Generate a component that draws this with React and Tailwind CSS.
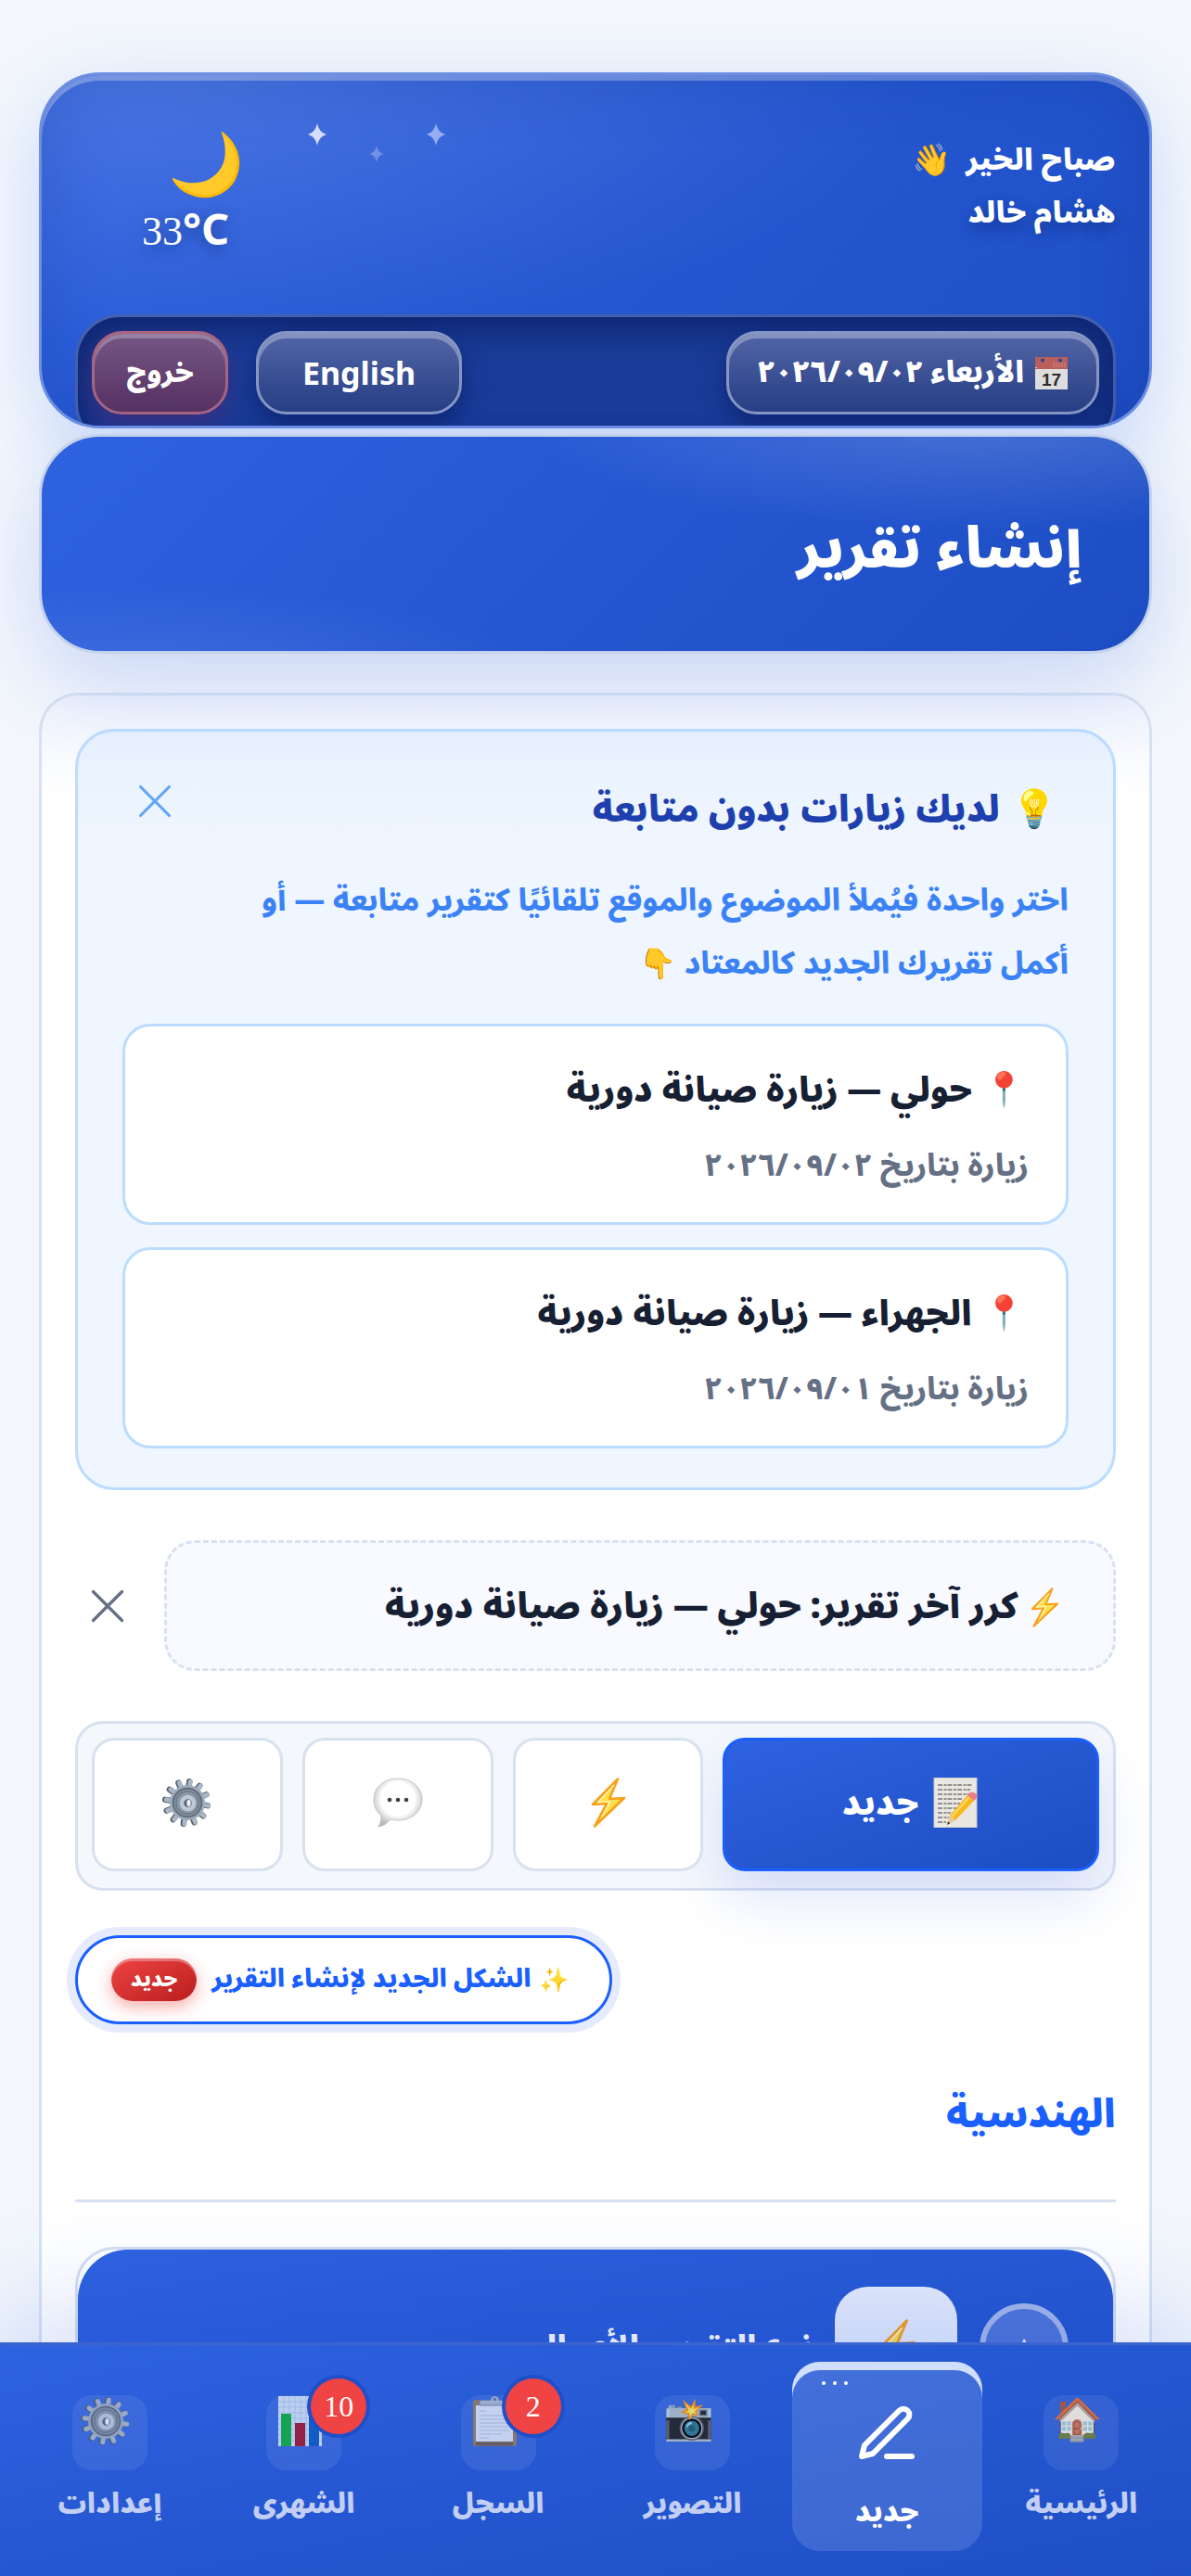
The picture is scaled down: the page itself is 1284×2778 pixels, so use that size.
import { X } from 'lucide-react';

const visits = [
  { id: 1, title: 'حولي — زيارة صيانة دورية', date: 'زيارة بتاريخ ٢٠٢٦/٠٩/٠٢' },
  { id: 2, title: 'الجهراء — زيارة صيانة دورية', date: 'زيارة بتاريخ ٢٠٢٦/٠٩/٠١' },
];

function Star({ className }) {
  return (
    <svg viewBox="0 0 24 28" className={className} aria-hidden="true">
      <path d="M12 0C14 8 17 12 24 14C17 16 14 20 12 28C10 20 7 16 0 14C7 12 10 8 12 0Z" fill="#d6dcff" />
    </svg>
  );
}

function Bolt({ className }) {
  return (
    <svg viewBox="0 0 38 54" className={className} aria-hidden="true">
      <path d="M29 1.5L2 29L17 28L4 52.5L36 22L20 23Z" fill="#ffe04a" stroke="#f9a01b" strokeWidth="2.6" strokeLinejoin="round" />
      <path d="M25 8L8 26.5L21 25.5L12 42" fill="none" stroke="#fff6b8" strokeWidth="1.5" />
    </svg>
  );
}

function Gear({ className }) {
  return (
    <svg viewBox="0 0 54 54" className={className} aria-hidden="true">
      <g stroke="#4f5b69" strokeWidth="6.4" strokeLinecap="round">
        {[0, 30, 60, 90, 120, 150].map((a) => (
          <path key={a} d="M26 4V50" transform={`rotate(${a + 8} 26 27)`} />
        ))}
      </g>
      <g stroke="#a9b6c4" strokeWidth="5" strokeLinecap="round">
        {[0, 30, 60, 90, 120, 150].map((a) => (
          <path key={a} d="M27 4V50" transform={`rotate(${a + 8} 27 27)`} />
        ))}
      </g>
      <circle cx="27" cy="27" r="19" fill="#9eacba" />
      <circle cx="27" cy="27" r="15.5" fill="#7d8a99" stroke="#5a6674" strokeWidth="1.5" />
      <circle cx="27" cy="27" r="12" fill="#8a97a5" stroke="#66727f" strokeWidth="1" />
      <circle cx="27.5" cy="27.5" r="6.5" fill="#56616e" stroke="#bccad8" strokeWidth="4.5" />
      <ellipse cx="28.5" cy="27.5" rx="2.2" ry="3.4" fill="#eef3f8" />
    </svg>
  );
}

function Bubble({ className }) {
  return (
    <svg viewBox="0 0 54 54" className={className} aria-hidden="true">
      <defs>
        <radialGradient id="bubble" cx="50%" cy="42%" r="58%">
          <stop offset="60%" stopColor="#ffffff" />
          <stop offset="100%" stopColor="#b9b9b9" />
        </radialGradient>
      </defs>
      <path d="M27 1C42 1 53 10.500 53 23.500C53 36.500 42 46 27 46C24 46 21 45.700 18.500 45C15.500 49.500 11 52.500 5.500 53C8.500 49.500 9.500 45 8.500 40.500C3.500 36.500 1 30.500 1 23.500C1 10.500 12 1 27 1Z" fill="url(#bubble)" stroke="#c4c4c4" strokeWidth="1" />
      <g fill="#3f3f3f">
        <circle cx="18" cy="24" r="2.300" />
        <circle cx="27" cy="24" r="2.300" />
        <circle cx="36" cy="24" r="2.300" />
      </g>
    </svg>
  );
}

function Memo({ className }) {
  return (
    <svg viewBox="0 0 50 54" className={className} aria-hidden="true">
      <rect x="1" y="0" width="46" height="54" fill="#e9e7e2" stroke="#cbc9c3" />
      <path d="M5 8h37M5 13h35M5 18h37M5 23h26M5 28h24M5 33h20M5 38h14M5 43h12M5 48h9" stroke="#77756f" strokeWidth="1.300" strokeDasharray="5 1.500 3 1" />
      <path d="M15 51L18 41L24 46Z" fill="#e9c99a" />
      <path d="M18 41L37 19L44 25L24 46Z" fill="#f7b81c" />
      <path d="M20 42.500L39 21" stroke="#ffd964" strokeWidth="2" />
      <path d="M37 19L40 16C43 14 49 18 47 22L44 25Z" fill="#ee7d86" />
      <path d="M15 51L16 47.500L18.500 49Z" fill="#33302c" />
    </svg>
  );
}

function Calendar({ className }) {
  return (
    <svg viewBox="0 0 35 35" className={className} aria-hidden="true">
      <rect width="35" height="35" fill="#dedede" />
      <rect width="35" height="13" fill="#b85f5c" />
      <circle cx="8" cy="3.500" r="2" fill="#2b438c" />
      <circle cx="27" cy="3.500" r="2" fill="#2b438c" />
      <path d="M20 6v5M23 6v5M26 6v5M29 6v5M32 6v5" stroke="#c97c77" strokeWidth="1.500" />
      <text x="2" y="12" fontSize="7.500" fill="#eed9d9" fontFamily="Liberation Sans">JUL</text>
      <text x="17.500" y="31" textAnchor="middle" fontSize="19" fill="#2b2b2b" fontFamily="Liberation Sans">17</text>
    </svg>
  );
}

function Chart({ className }) {
  return (
    <svg viewBox="0 0 47 54" className={className} aria-hidden="true">
      <rect width="47" height="54" fill="#d5e2f4" />
      <path d="M0 6h47M0 12h47M0 18h47M0 24h47M0 30h47M0 36h47M0 42h47M0 48h47M6 0v54M12 0v54M18 0v54M24 0v54M30 0v54M36 0v54M42 0v54" stroke="#a9c3e6" strokeWidth="0.800" />
      <rect x="3" y="19" width="11" height="35" fill="#0fae3c" />
      <rect x="18" y="29" width="11" height="25" fill="#a5152f" />
      <rect x="33" y="10" width="11" height="44" fill="#0b5cc2" />
    </svg>
  );
}

function Clipboard({ className }) {
  return (
    <svg viewBox="0 0 47 54" className={className} aria-hidden="true">
      <rect x="0" y="4" width="47" height="50" rx="3" fill="#94795f" />
      <rect x="3" y="10" width="40" height="39" fill="#dce3f4" />
      <path d="M7 16h7M7 21h32M7 25h32M7 29h32M7 33h32M7 37h32M7 41h24M7 45h10" stroke="#b3bdd6" strokeWidth="1.200" />
      <rect x="3" y="49.500" width="40" height="4" fill="#6b5a55" />
      <path d="M7 10V6C7 5 9 4.500 12 4.500H19A4.500 4.500 0 0 1 28 4.500H35C38 4.500 40 5 40 6V10Z" fill="#adb9d2" stroke="#7482a3" />
      <circle cx="23.500" cy="3.500" r="1.700" fill="#5c71ae" />
    </svg>
  );
}

const navItems = [
  { icon: <span className="text-[44px] leading-[54px]">🏠</span>, label: 'الرئيسية' },
  { label: 'جديد', active: true },
  { icon: <span className="text-[44px] leading-[54px]">📸</span>, label: 'التصوير' },
  { icon: <Clipboard className="mt-px h-[54px] w-[47px]" />, label: 'السجل', badge: '2' },
  { icon: <Chart className="mt-px h-[54px] w-[47px]" />, label: 'الشهرى', badge: '10' },
  { icon: <Gear className="mt-px size-[54px]" />, label: 'إعدادات' },
];

function Header() {
  return (
    <header className="relative flex h-[384px] flex-col justify-between overflow-hidden rounded-[66px] border-[3px] border-[#6d8ee2] bg-[radial-gradient(ellipse_at_12%_0%,rgba(255,255,255,0.13),transparent_55%),linear-gradient(135deg,#2f62e0,#2557d2_50%,#1e4fc6)] shadow-[0_24px_80px_rgba(37,99,235,0.2),inset_0_6px_0_rgba(255,255,255,0.28),inset_0_0_70px_rgba(15,40,120,0.22)]">
      <div className="flex items-start justify-between pt-[60px] pr-9 pl-[108px]">
        <div className="mt-1 text-[32px] leading-[57px] font-black text-white">
          <p className="flex items-center gap-4">
            صباح الخير <span className="text-[34px]">👋</span>
          </p>
          <p className="[text-shadow:0_6px_16px_rgba(10,30,90,0.45)]">هشام خالد</p>
        </div>
        <div dir="ltr" className="flex items-start gap-[68px]">
          <div className="flex flex-col">
            <span className="h-[78px] overflow-hidden pl-7 text-[66px] leading-[76px]">🌙</span>
            <span className="flex items-baseline text-white [text-shadow:0_6px_16px_rgba(10,30,90,0.45)]">
              <span className="font-[Liberation_Serif] text-[44px] leading-[54px]">33</span>
              <span className="font-[Noto_Sans] text-[47px] leading-[54px] font-bold">°C</span>
            </span>
          </div>
          <div className="flex gap-11">
            <Star className="-mt-2 h-6 w-[22px]" />
            <Star className="mt-4 h-[18px] w-[18px] opacity-35" />
            <Star className="-mt-2 h-6 w-[22px] opacity-60" />
          </div>
        </div>
      </div>
      <div className="-mb-6 mx-9 flex h-[144px] shrink-0 items-start justify-between rounded-[48px] border-[3px] border-[#4560af] bg-[#1a3c98] px-[15px] pt-[15px] shadow-[inset_0_12px_36px_rgba(10,25,90,0.5),inset_0_0_30px_rgba(10,25,90,0.5)]">
        <button type="button" className="flex h-[90px] w-[402px] items-center justify-center gap-3 rounded-[33px] border-[3px] border-[#8797c4] bg-linear-to-b from-[#5265a6] to-[#283f84] text-[32px] font-black text-white shadow-[inset_0_5px_0_rgba(255,255,255,0.3),0_12px_24px_rgba(8,20,80,0.5)]">
          <Calendar className="size-[35px]" /> الأربعاء ٢٠٢٦/٠٩/٠٢
        </button>
        <div className="flex gap-[30px]">
          <button type="button" lang="en" className="h-[90px] w-[222px] rounded-[33px] border-[3px] border-[#8797c4] bg-linear-to-b from-[#5265a6] to-[#283f84] font-[Noto_Sans] text-[34px] font-bold text-white shadow-[inset_0_5px_0_rgba(255,255,255,0.3),0_12px_24px_rgba(8,20,80,0.5)]">
            English
          </button>
          <button type="button" className="h-[90px] w-[147px] rounded-[33px] border-[3px] border-[#a86580] bg-linear-to-b from-[#745684] to-[#573262] text-[30px] font-black text-white shadow-[inset_0_5px_0_rgba(255,255,255,0.25),0_12px_24px_rgba(120,30,80,0.35)]">
            خروج
          </button>
        </div>
      </div>
    </header>
  );
}

function FollowUpPanel() {
  return (
    <section className="rounded-[42px] border-[3px] border-[#bcdcff] bg-linear-to-b from-[#e8f1fe] to-[#eff6ff] to-15% px-12 pt-[51px] pb-[42px]">
      <div className="flex items-center justify-between pr-3 pl-1">
        <h2 className="flex h-[68px] items-center gap-3 text-[39px] font-black text-[#1e40af]">
          <span className="text-[40px]">💡</span> لديك زيارات بدون متابعة
        </h2>
        <button type="button" aria-label="إغلاق" className="-mt-5 text-[#60a5fa]">
          <X size={62} strokeWidth={1.2} />
        </button>
      </div>
      <p className="mt-[30px] pl-28 text-[33px] leading-[68px] font-extrabold text-[#3b82f6]">
        اختر واحدة فيُملأ الموضوع والموقع تلقائيًا كتقرير متابعة — أو أكمل تقريرك الجديد كالمعتاد <span className="text-[32px]">👇</span>
      </p>
      <ul className="mt-[30px] flex flex-col gap-6">
        {visits.map((v) => (
          <li key={v.id}>
            <button type="button" className="block w-full rounded-[30px] border-[3px] border-[#bcdcff] bg-white px-10 pt-[33px] pb-6 text-right">
              <span className="flex items-center gap-3 pr-1 text-[37px] leading-[72px] font-black text-[#172033]">
                <span className="text-[36px]">📍</span> {v.title}
              </span>
              <span className="mt-2.5 block text-[33px] leading-[72px] font-extrabold text-[#667085]">{v.date}</span>
            </button>
          </li>
        ))}
      </ul>
    </section>
  );
}

function BottomNav() {
  return (
    <nav className="relative z-10 grid shrink-0 grid-cols-6 gap-[5px] border-t-[3px] border-[#3c64d0] bg-linear-to-br from-[#2f62e0] via-[#2557d2] to-[#1e4fc6] px-4 pt-[18px] pb-[27px] shadow-[0_-30px_120px_rgba(37,80,220,0.2)]">
      {navItems.map((item) =>
        item.active ? (
          <a key={item.label} href="#new" aria-current="page" className="relative flex h-[204px] flex-col items-center rounded-[30px] bg-white/13 pt-[42px] text-white shadow-[inset_0_9px_0_#d0dffd]">
            <span aria-hidden="true" className="absolute top-[21px] left-8 flex gap-2">
              <span className="size-1 rounded-full bg-white" />
              <span className="size-1 rounded-full bg-white" />
              <span className="size-1 rounded-full bg-white" />
            </span>
            <svg viewBox="0 0 24 24" className="size-[72px]" fill="none" stroke="currentColor" strokeWidth="2" strokeLinecap="round" strokeLinejoin="round">
              <path d="M12 20h9" />
              <path d="M16.5 3.5a2.121 2.121 0 0 1 3 3L7 19l-4 1 1-4L16.5 3.5z" />
            </svg>
            <span className="mt-6 text-[30px] leading-[50px] font-black">{item.label}</span>
          </a>
        ) : (
          <a key={item.label} href="#tab" className="flex flex-col items-center pt-9 text-[#c3cff2]">
            <span className="relative flex size-[81px] justify-center rounded-[21px] bg-white/8 pr-2">
              <span className="opacity-85">{item.icon}</span>
              {item.badge && (
                <span className="absolute -top-[18px] -right-[27px] flex size-[60px] items-center justify-center rounded-full bg-[#f04343] font-[Liberation_Serif] text-[32px] text-white ring-4 ring-[#1f4fc8]">
                  {item.badge}
                </span>
              )}
            </span>
            <span className="mt-3 text-[30px] leading-[50px] font-black">{item.label}</span>
          </a>
        ),
      )}
    </nav>
  );
}

export default function App() {
  return (
    <div dir="rtl" lang="ar" className="flex h-screen flex-col bg-[#f3f7fc] font-['Noto_Sans_Arabic','DejaVu_Sans',sans-serif]">
      <main className="min-h-0 flex-1 overflow-y-auto px-[42px] pt-[78px] [scrollbar-width:none]">
        <Header />
        <div className="relative mt-1.5 flex h-[237px] items-center rounded-[66px] border-[3px] border-[#c4d2ec] bg-[radial-gradient(ellipse_at_85%_-10%,rgba(255,255,255,0.18),transparent_35%),radial-gradient(ellipse_at_10%_115%,rgba(255,255,255,0.1),transparent_28%),linear-gradient(135deg,#2f62e0,#2557d2_50%,#1c4dc3)] px-[72px] shadow-[0_30px_90px_rgba(37,80,220,0.2)]">
          <h1 className="pt-3 text-[60px] leading-[100px] font-black text-white">إنشاء تقرير</h1>
        </div>

        <div className="mt-[42px] rounded-t-[42px] border-[3px] border-b-0 border-[#d7e2f1] bg-linear-to-b from-[#eff3fd] to-white to-[110px] px-9 pt-9">
          <FollowUpPanel />

          <div className="mt-[54px] flex items-center gap-[30px]">
            <button type="button" className="flex h-[141px] flex-1 items-center gap-3 rounded-[33px] border-[3px] border-dashed border-[#d7e1f0] bg-[#f8faff] px-[57px] pt-1 text-[38px] font-black text-[#172033]">
              <Bolt className="h-[43px] w-[33px]" /> كرر آخر تقرير: حولي — زيارة صيانة دورية
            </button>
            <button type="button" aria-label="إخفاء" className="ml-1 text-[#667085]">
              <X size={62} strokeWidth={1.3} />
            </button>
          </div>

          <div className="mt-[54px] flex gap-[21px] rounded-[30px] border-[3px] border-[#d7e1f0] bg-[#f4f7fc] p-[15px] pb-[18px]">
            <button type="button" className="flex h-[144px] flex-[2] items-center justify-center gap-4 rounded-[24px] border-[3px] border-[#1a5fff] bg-linear-to-br from-[#2f62e0] to-[#1c4dc3] text-[36px] font-black text-white shadow-[0_30px_60px_rgba(37,80,220,0.14)]">
              <Memo className="-mt-1 h-[54px] w-[50px]" /> جديد
            </button>
            <button type="button" aria-label="سريع" className="flex h-[144px] flex-1 items-center justify-center rounded-[24px] border-[3px] border-[#d7e1f0] bg-white">
              <Bolt className="-mt-1 h-[54px] w-[38px]" />
            </button>
            <button type="button" aria-label="رسائل" className="flex h-[144px] flex-1 items-center justify-center rounded-[24px] border-[3px] border-[#d7e1f0] bg-white">
              <Bubble className="-mt-1 size-[54px]" />
            </button>
            <button type="button" aria-label="ضبط" className="flex h-[144px] flex-1 items-center justify-center rounded-[24px] border-[3px] border-[#d7e1f0] bg-white">
              <Gear className="-mt-1 size-[54px]" />
            </button>
          </div>

          <div className="mt-12 flex justify-end">
            <button type="button" className="flex h-24 items-center gap-2 rounded-full border-[3px] border-[#1a5fff] bg-white pr-11 pl-9 text-[27px] font-black text-[#1a5fff] ring-9 ring-[#e5ebfc]">
              <span className="text-[26px]">✨</span> الشكل الجديد لإنشاء التقرير
              <span className="mr-2 flex h-[46px] items-center rounded-full bg-linear-to-br from-[#ef4444] to-[#b91c1c] px-[21px] text-[22px] text-white shadow-[inset_0_3px_0_rgba(255,255,255,0.3),0_6px_18px_rgba(239,68,68,0.45)]">
                جديد
              </span>
            </button>
          </div>

          <h2 className="mt-14 border-b-[3px] border-[#d7e1f0] pb-[50px] text-[42px] leading-[83px] font-black text-[#1a5fff]">الهندسية</h2>

          <section className="mt-12 rounded-t-[42px] border-[3px] border-b-0 border-[#d3deef] bg-white">
            <button type="button" className="flex h-[212px] w-full items-center gap-6 rounded-t-[54px] bg-linear-to-br from-[#2f62e0] to-[#1e4fc6] px-12 text-[34px] font-black text-white">
              <span className="flex size-24 items-center justify-center rounded-full border-[6px] border-[#a5b8ea] bg-[#4e75d6] text-[28px] leading-none">▲</span>
              <span className="flex size-[132px] items-center justify-center rounded-[36px] bg-[#e6edfc]">
                <Bolt className="h-[62px] w-[44px]" />
              </span>
              نوع التقرير والأعمال
            </button>
          </section>
        </div>
      </main>
      <BottomNav />
    </div>
  );
}
